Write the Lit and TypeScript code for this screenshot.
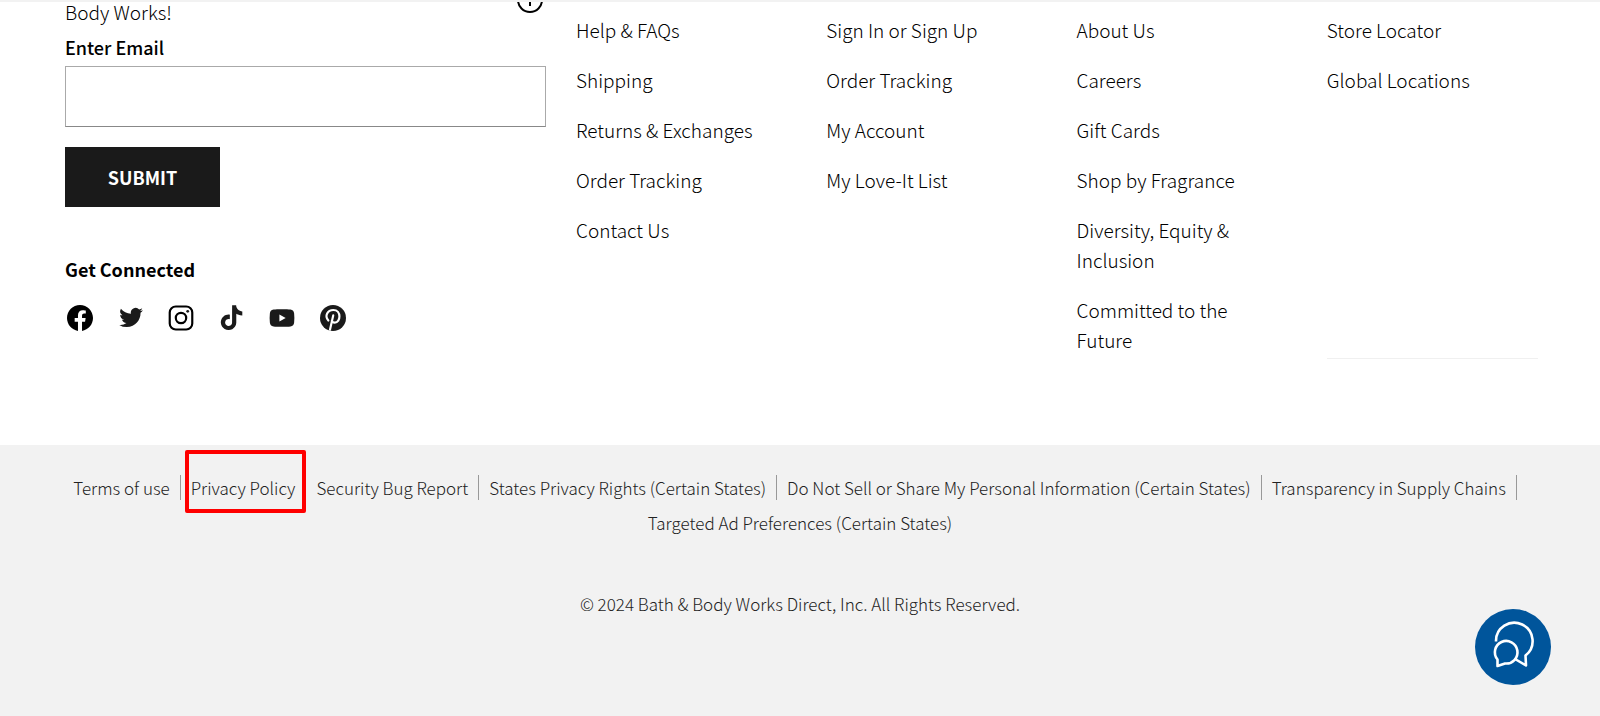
import { LitElement, html, css, svg, nothing } from "lit";
import { customElement } from "lit/decorators.js";

const columns = [
  ["Help & FAQs", "Shipping", "Returns & Exchanges", "Order Tracking", "Contact Us"],
  ["Sign In or Sign Up", "Order Tracking", "My Account", "My Love-It List"],
  ["About Us", "Careers", "Gift Cards", "Shop by Fragrance", "Diversity, Equity & Inclusion", "Committed to the Future"],
  ["Store Locator", "Global Locations"],
];

const legal = [
  "Terms of use",
  "Privacy Policy",
  "Security Bug Report",
  "States Privacy Rights (Certain States)",
  "Do Not Sell or Share My Personal Information (Certain States)",
  "Transparency in Supply Chains",
  "Targeted Ad Preferences (Certain States)",
];

const social = [
  { name: "Facebook", art: svg`<path fill="#000" d="M24 12.07C24 5.45 18.63.07 12 .07S0 5.45 0 12.07c0 5.99 4.39 10.96 10.13 11.86v-8.39H7.08v-3.47h3.05V9.43c0-3.01 1.79-4.67 4.53-4.67 1.31 0 2.69.24 2.69.24v2.95h-1.52c-1.49 0-1.96.93-1.96 1.87v2.25h3.33l-.53 3.47h-2.8v8.39C19.61 23.03 24 18.06 24 12.07z"/>` },
  { name: "Twitter", art: svg`<path transform="translate(1.2 .6) scale(.91)" d="M23.95 4.57a10 10 0 0 1-2.82.77 4.96 4.96 0 0 0 2.16-2.72c-.95.55-2 .95-3.13 1.18a4.92 4.92 0 0 0-8.38 4.48C7.69 8.09 4.07 6.13 1.64 3.16a4.93 4.93 0 0 0 1.52 6.57 4.9 4.9 0 0 1-2.23-.61v.06a4.92 4.92 0 0 0 3.95 4.83 5 5 0 0 1-2.21.08 4.94 4.94 0 0 0 4.6 3.42A9.87 9.87 0 0 1 0 19.54a13.99 13.99 0 0 0 7.55 2.21c9.05 0 14-7.5 14-13.98 0-.21 0-.42-.02-.63a9.94 9.94 0 0 0 2.42-2.57z"/>` },
  { name: "Instagram", art: svg`<g fill="none" stroke="#000" stroke-width="2"><rect x="1.6" y="1.4" width="20.8" height="21.2" rx="5.6"/><circle cx="12" cy="12" r="4.8"/></g><circle cx="18.2" cy="5.8" r="1.3"/>` },
  { name: "TikTok", art: svg`<path transform="translate(.2 .3) scale(.95)" d="M12.53.02C13.84 0 15.14.01 16.44 0c.08 1.53.63 3.09 1.75 4.17 1.12 1.11 2.7 1.62 4.24 1.79v4.03c-1.44-.05-2.89-.35-4.2-.97-.57-.26-1.1-.59-1.62-.93-.01 2.92.01 5.84-.02 8.75-.08 1.4-.54 2.79-1.35 3.94-1.31 1.92-3.58 3.17-5.91 3.21-1.43.08-2.86-.31-4.08-1.03-2.02-1.19-3.44-3.37-3.65-5.71a9 9 0 0 1 0-1.49c.18-1.9 1.12-3.72 2.58-4.96 1.66-1.44 3.98-2.13 6.15-1.72.02 1.48-.04 2.96-.04 4.44-.99-.32-2.15-.23-3.02.37-.63.41-1.11 1.04-1.36 1.75-.21.51-.15 1.07-.14 1.61.24 1.64 1.82 3.02 3.5 2.87 1.12-.01 2.19-.66 2.77-1.61.19-.33.4-.67.41-1.06.1-1.79.06-3.57.07-5.36.01-4.03-.01-8.05.02-12.07z"/>` },
  { name: "YouTube", art: svg`<path fill-rule="evenodd" d="M4.2 4.2C7 3.7 17 3.7 19.8 4.2c2.2.4 3.2 1.5 3.4 3.6.3 2.7.3 5.7 0 8.4-.2 2.1-1.2 3.2-3.4 3.6-2.8.5-12.8.5-15.6 0-2.2-.4-3.2-1.5-3.4-3.6-.3-2.7-.3-5.7 0-8.4C1 5.7 2 4.6 4.2 4.2zM9.6 8.7v6.6l5.8-3.3z"/>` },
  { name: "Pinterest", art: svg`<circle cx="12" cy="12" r="12"/><path fill="none" stroke="#fff" stroke-width="2" stroke-linecap="round" d="M7.7 14.3C3.9 10 7 4.6 12.3 4.6c7.6 0 7 11.7 1.3 11.7-1.6 0-2.5-.9-2.7-1.7M12.2 9.6 9.2 22.8"/>` },
];

@customElement("app-root")
export class AppRoot extends LitElement {
  static styles = css`
    :host {
      display: block;
      position: relative;
      min-height: 100vh;
      background: #f2f2f2;
      color: #000;
      font: 300 19px/30px "Noto Sans CJK SC", "Noto Sans", sans-serif;
    }
    * { box-sizing: border-box; }
    a { color: inherit; text-decoration: none; }
    ul { list-style: none; margin: 0; padding: 0; }
    p, h2 { margin: 0; }
    .main {
      display: grid;
      grid-template-columns: 1fr 2fr;
      column-gap: 30px;
      padding: 0 62px 86px 65px;
      border-top: 2px solid #f2f2f2;
      background: #fff;
      overflow: hidden;
    }
    .intro { display: flex; justify-content: space-between; height: 25px; line-height: 20px; }
    .info { width: 26px; height: 26px; margin: -15px 3px 0 0; }
    .label { display: block; font-size: 18px; font-weight: 500; margin: 5px 0 4px; }
    .field {
      display: block;
      width: 100%;
      height: 61px;
      padding: 0 16px;
      border: 1px solid #aaa;
      border-bottom-color: #888;
      border-radius: 0;
      font: inherit;
    }
    .submit {
      display: block;
      margin: 20px 0 47px;
      width: 155px;
      height: 60px;
      border: 0;
      padding: 0;
      background: #1a1a1a;
      color: #fff;
      font: inherit;
      font-size: 18px;
      font-weight: 700;
    }
    .heading { font-size: 18px; font-weight: 700; }
    .social { display: flex; justify-content: space-between; width: 279px; margin: 21px 0 0 2px; }
    .social a { display: block; width: 26px; height: 26px; }
    .social svg { display: block; width: 26px; height: 26px; fill: #1a1a1a; }
    .links { display: grid; grid-template-columns: repeat(4, 1fr); column-gap: 39px; padding-top: 13px; }
    .column { display: flex; flex-direction: column; gap: 20px; padding-bottom: 4px; }
    .column li { padding-right: 24px; }
    .column:last-child { border-bottom: 1px solid #f0f0f0; }
    .bottom { padding: 30px 40px 90px; color: #222; font-size: 17px; }
    .legal { display: flex; flex-wrap: wrap; justify-content: center; row-gap: 10px; }
    .entry { position: relative; padding-right: 10px; margin-right: 10px; border-right: 1px solid #999; line-height: 25px; }
    .entry:last-child { border: 0; margin: 0; padding: 0; }
    .mark {
      position: absolute;
      inset: -25px -1px -13px -6px;
      border: 4px solid #f00;
      border-radius: 2px;
      pointer-events: none;
    }
    .copyright { margin-top: 54px; text-align: center; }
    .chat {
      position: absolute;
      right: 49px;
      bottom: 31px;
      width: 76px;
      height: 76px;
      padding: 0;
      border: 0;
      border-radius: 50%;
      background: #00559b;
    }
    .chat svg { display: block; width: 76px; height: 76px; }
  `;

  render() {
    return html`
      <section class="main">
        <div>
          <div class="intro">
            <p>Body Works!</p>
            <svg class="info" viewBox="0 0 26 26" fill="none" stroke="#000" stroke-width="2">
              <circle cx="13" cy="13" r="12" /><path d="M13 11v8M13 6v2" />
            </svg>
          </div>
          <form @submit=${(e: Event) => e.preventDefault()}>
            <label class="label" for="email">Enter Email</label>
            <input class="field" id="email" type="email" />
            <button class="submit">SUBMIT</button>
          </form>
          <h2 class="heading">Get Connected</h2>
          <div class="social">
            ${social.map((s) => html`<a href="#" aria-label=${s.name}><svg viewBox="0 0 24 24">${s.art}</svg></a>`)}
          </div>
        </div>
        <nav class="links">
          ${columns.map((c) => html`<ul class="column">${c.map((t) => html`<li><a href="#">${t}</a></li>`)}</ul>`)}
        </nav>
      </section>
      <footer class="bottom">
        <ul class="legal">
          ${legal.map((t) => html`<li class="entry"><a href="#">${t}</a>${t === "Privacy Policy" ? html`<span class="mark"></span>` : nothing}</li>`)}
        </ul>
        <p class="copyright">© 2024 Bath &amp; Body Works Direct, Inc. All Rights Reserved.</p>
      </footer>
      <button class="chat" aria-label="Chat">
        <svg viewBox="0 0 76 76" fill="none" stroke="#fff" stroke-width="2.6" stroke-linejoin="round">
          <path d="M21 32.5A18.3 18.3 0 1 1 50.5 46.5L51 56.5 40 50" />
          <path d="M22.5 57v-6.5A11.3 11.3 0 1 1 30 54.5z" />
        </svg>
      </button>
    `;
  }
}
